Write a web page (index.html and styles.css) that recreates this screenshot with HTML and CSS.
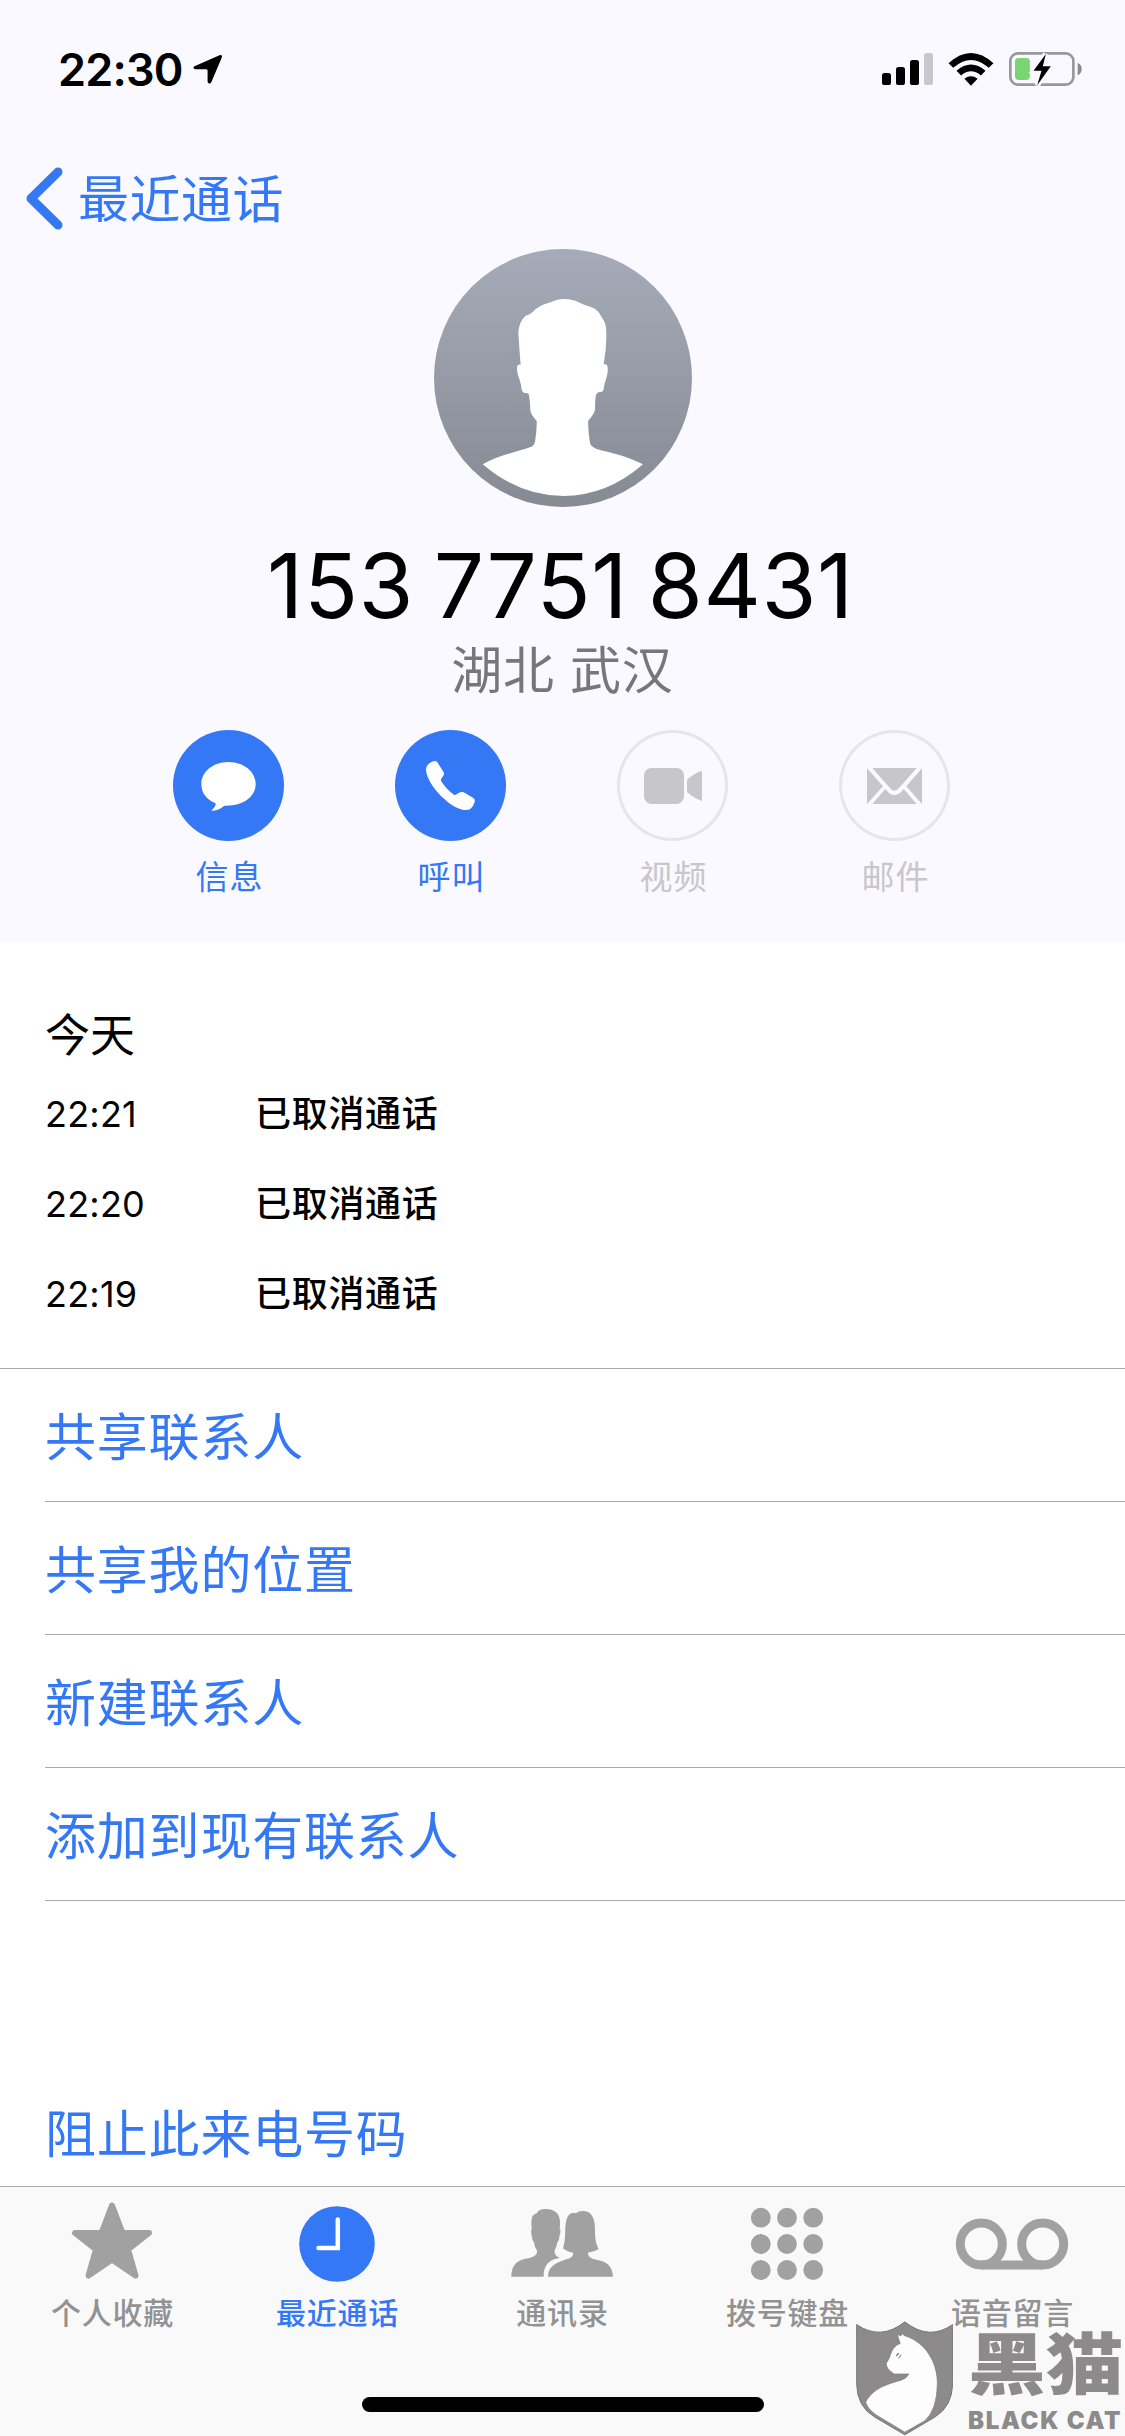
FILE: index.html
```html
<!DOCTYPE html>
<html lang="zh-CN">
<head>
  <meta charset="utf-8">
  <title>最近通话</title>
  <link rel="stylesheet" href="styles.css">
</head>
<body>
  <div class="header">
    <div class="status-bar">
      <span class="time">22:30</span>
      <svg class="location-icon" viewBox="0 0 30 30">
        <path d="M1.5 12.2L26.5 1.2Q29.6 .4 28.8 3.6L18.4 28Q16.4 31 14.6 28V16.4Q14.4 15.4 13.4 15.2H2Q-1 14.2 1.5 12.2Z"/>
      </svg>
      <div class="status-icons">
        <svg class="signal-icon" viewBox="0 0 51 32">
          <rect x="0" y="20" width="9" height="12" rx="2.6"/>
          <rect x="14" y="14" width="9" height="18" rx="2.6"/>
          <rect x="28" y="7" width="9" height="25" rx="2.6"/>
          <rect x="42" y="0" width="9" height="32" rx="2.6" fill="#c8c7cc"/>
        </svg>
        <svg class="wifi-icon" viewBox="294 65 138 100">
          <path d="M295 96Q363 34 431 96L417 110Q363 62 309 110Z"/>
          <path d="M319 119Q363 81 407 119L393 133Q363 108 333 133Z"/>
          <path d="M343 143Q363 128 383 143L363 164Z"/>
        </svg>
        <svg class="battery-icon" viewBox="477 66 220 102">
          <rect x="481" y="70" width="190" height="94" rx="23" fill="none" stroke="#98989c" stroke-width="8"/>
          <path d="M684 98Q696 104 696 117T684 136Z" fill="#8a8a8e"/>
          <rect x="495" y="84" width="45" height="66" rx="11" fill="#77d672"/>
          <path d="M587 72L551 122H575L562 166L603 109H579Z" fill="none" stroke="#f9f9ff" stroke-width="16"/>
          <path d="M588 72L551 122H575L562 166L603 109H579Z"/>
        </svg>
      </div>
    </div>

    <div class="nav-bar">
      <svg class="back-icon" viewBox="0 0 37 63">
        <path d="M32 5L5 31.5L32 58"/>
      </svg>
      <span class="back-label">最近通话</span>
    </div>

    <div class="contact">
      <svg class="avatar" viewBox="102 57 774 774">
        <defs>
          <linearGradient id="avatar-bg" x1="0" y1="0" x2="0" y2="1">
            <stop offset="0" stop-color="#a6abb9"/>
            <stop offset="1" stop-color="#858a93"/>
          </linearGradient>
        </defs>
        <circle cx="489" cy="444" r="387" fill="url(#avatar-bg)"/>
        <path fill="#fff" d="M490 207Q515 206 539 218Q557 227 575 232Q595 240 604 260Q615 273 618 293Q622 345 611 403Q626 399 623 425C621 445 615 450 611 477Q610 487 599 486Q590 487 587 498Q585 515 585 540Q580 556 564 573Q565 610 570 639Q573 650 588 656C635 670 675 675 729 703Q620 798 490 798T248 703C290 678 345 667 390 652Q403 647 405 635Q411 600 410 573Q390 550 391 540Q390 510 386 492Q383 488 373 489Q365 486 364 472C362 450 352 440 351 418Q350 400 362 404Q358 360 355 310Q356 275 377 257C385 254 390 254 397 247Q415 226 452 217Q472 207 490 207Z"/>
      </svg>
      <div class="phone-number">153 7751 8431</div>
      <div class="region">湖北 武汉</div>
    </div>

    <div class="actions">
      <div class="action">
        <div class="action-circle">
          <svg viewBox="69 60 333 333">
            <path d="M235 156C281 156 317 185 317 222S281 289 223 287Q206 302 184 302Q198 290 197 280Q154 262 154 222C154 185 190 156 235 156Z"/>
          </svg>
        </div>
        <span>信息</span>
      </div>
      <div class="action">
        <div class="action-circle">
          <svg viewBox="735 60 333 333">
            <path d="M850 154Q858 151 862 157L881 187Q883 191 881 196L873 207Q872 211 874 214Q890 240 912 254Q915 256 919 253L932 246Q937 245 941 247L970 264Q976 268 974 276Q970 290 961 297Q953 301 938 299C900 292 835 230 828 182Q827 161 850 154Z"/>
          </svg>
        </div>
        <span>呼叫</span>
      </div>
      <div class="action disabled">
        <div class="action-circle">
          <svg viewBox="111 60 333 333">
            <rect x="192" y="174" width="120" height="108" rx="23"/>
            <path d="M321 209Q342 190 366 182V273Q342 265 321 246Z"/>
          </svg>
        </div>
        <span>视频</span>
      </div>
      <div class="action disabled">
        <div class="action-circle">
          <svg viewBox="777 60 333 333">
            <path d="M861 175L909 229L861 282ZM1026 175L979 229L1026 282ZM877 174H1010L959 232Q943 253 928 232ZM877 282L916 237L926 248Q943 262 961 248L971 237L1010 282Z"/>
          </svg>
        </div>
        <span>邮件</span>
      </div>
    </div>
  </div>

  <div class="calls">
    <div class="calls-day">今天</div>
    <div class="call"><span class="call-time">22:21</span><span>已取消通话</span></div>
    <div class="call"><span class="call-time">22:20</span><span>已取消通话</span></div>
    <div class="call"><span class="call-time">22:19</span><span>已取消通话</span></div>
  </div>

  <div class="options">
    <div class="option">共享联系人</div>
    <div class="option">共享我的位置</div>
    <div class="option">新建联系人</div>
    <div class="option">添加到现有联系人</div>
  </div>
  <div class="block-caller">阻止此来电号码</div>

  <div class="tab-bar">
    <div class="tabs">
      <div class="tab">
        <svg viewBox="0 0 110 78">
          <path d="M55 4.500L65.500 32H92L71 48.500L78.500 74.500L55 58.500L31.500 74.500L39 48.500L18 32H44.500Z" stroke="#a1a1a1" stroke-width="6" stroke-linejoin="round"/>
        </svg>
        <span>个人收藏</span>
      </div>
      <div class="tab active">
        <svg class="clock-icon" viewBox="0 0 110 82">
          <circle cx="55" cy="43" r="37.800"/>
          <path d="M55.800 18.500V47H36.500" fill="none" stroke="#fff" stroke-width="4.500" stroke-linecap="round"/>
        </svg>
        <span>最近通话</span>
      </div>
      <div class="tab">
        <svg viewBox="0 0 110 78">
          <g transform="translate(-57 -31.300) scale(.3333)">
            <path d="M184 321C184 285 203 269 240 265Q264 258 261 242Q253 232 252 217Q246 213 243 185Q246 181 245 174C243 145 245 137 260 131Q266 117 290 118C322 119 332 140 330 165L329 178Q334 184 329 196Q327 215 322 218Q321 231 314 242Q312 258 329 265C298 268 280 288 281 321Z"/>
            <path d="M294 321C294 295 310 281 345 270Q374 263 369 249Q350 246 339 236Q346 215 346 175C348 145 355 124 378 131Q386 123 402 124C425 125 436 148 435 180C435 215 440 225 446 238Q433 247 414 249Q412 265 440 270C472 276 488 291 489 321Z"/>
          </g>
        </svg>
        <span>通讯录</span>
      </div>
      <div class="tab">
        <svg viewBox="0 0 110 80">
          <circle cx="28.800" cy="16.700" r="9.900"/><circle cx="55" cy="16.700" r="9.900"/><circle cx="81.200" cy="16.700" r="9.900"/>
          <circle cx="28.800" cy="43" r="9.900"/><circle cx="55" cy="43" r="9.900"/><circle cx="81.200" cy="43" r="9.900"/>
          <circle cx="28.800" cy="69" r="9.900"/><circle cx="55" cy="69" r="9.900"/><circle cx="81.200" cy="69" r="9.900"/>
        </svg>
        <span>拨号键盘</span>
      </div>
      <div class="tab">
        <svg class="voicemail-icon" viewBox="-2 0 114 80">
          <circle cx="24.300" cy="43" r="21"/>
          <circle cx="85.700" cy="43" r="21"/>
          <path d="M24.300 64H85.700"/>
        </svg>
        <span>语音留言</span>
      </div>
    </div>
    <div class="home-indicator"></div>
  </div>

  <div class="watermark">
    <svg class="shield" viewBox="48 423 292 345">
      <path d="M50 433Q122 483 195 425Q268 483 339 433V610Q338 680 285 712L195 765L105 712Q50 680 50 610Z" fill="#8d8a8b" stroke="#777" stroke-width="3"/>
      <path d="M172 463L183 467L187 461L195 467C255 485 293 545 293 610Q292 690 255 723L195 757L110 706Q85 690 77 667C100 620 155 610 185 600Q202 594 207 582Q185 582 163 582Q138 566 139 550Q147 540 153 520Q160 498 181 490Z" fill="#fdfdfd" stroke="#777" stroke-width="2"/>
      <path d="M168 529Q170 519 178 518L174 526ZM184 521Q185 532 173 536L179 529Z" fill="#777"/>
    </svg>
    <div class="brand">
      <span class="brand-cn">黑猫</span>
      <span class="brand-en">BLACK CAT</span>
    </div>
  </div>
</body>
</html>
```
FILE: styles.css
```css
* {
  box-sizing: border-box;
}
body {
  margin: 0;
  width: 1125px;
  height: 2436px;
  position: relative;
  overflow: hidden;
  background-color: #fff;
  color: #000;
  font-family: Inter, "Noto Sans CJK SC", sans-serif;
}
svg {
  display: block;
  flex-shrink: 0;
}
.header {
  height: 943px;
  background-color: #f9f9ff;
}

/* status bar */
.status-bar {
  height: 132px;
  display: flex;
  align-items: center;
  padding: 6px 43px 0 58px;
}
.time {
  width: 135px;
  font-size: 45px;
  font-weight: 600;
  letter-spacing: -0.8px;
  white-space: nowrap;
}
.location-icon {
  width: 30px;
  height: 30px;
}
.status-icons {
  margin-left: auto;
  display: flex;
  align-items: center;
}
.signal-icon {
  width: 51px;
  height: 32px;
}
.wifi-icon {
  width: 46px;
  height: 33px;
  margin: 0 15px;
}
.battery-icon {
  width: 73px;
  height: 34px;
}

/* navigation */
.nav-bar {
  height: 117px;
  display: flex;
  align-items: flex-start;
  padding: 35px 0 0 26px;
  color: #3478f6;
}
.back-icon {
  width: 37px;
  height: 63px;
  fill: none;
  stroke: #3478f6;
  stroke-width: 9;
  stroke-linecap: round;
  stroke-linejoin: round;
}
.back-label {
  margin-left: 15px;
  font-size: 51px;
  line-height: 65px;
  letter-spacing: 0.5px;
}

/* contact card */
.contact {
  display: flex;
  flex-direction: column;
  align-items: center;
}
.avatar {
  width: 258px;
  height: 258px;
}
.phone-number {
  margin-top: 25px;
  padding-right: 4px;
  font-size: 89px;
  line-height: 108px;
  letter-spacing: 0.6px;
  word-spacing: -6px;
}
.region {
  margin-top: 1px;
  font-size: 51px;
  line-height: 60px;
  letter-spacing: 0.8px;
  color: #77777a;
}
.actions {
  display: flex;
  justify-content: center;
  gap: 111px;
  margin-top: 29px;
  padding-right: 2px;
}
.action {
  width: 111px;
  display: flex;
  flex-direction: column;
  align-items: center;
  font-size: 33px;
  line-height: 40px;
  letter-spacing: 1px;
  color: #3478f6;
}
.action span {
  padding-left: 2px;
}
.action-circle {
  width: 111px;
  height: 111px;
  margin-bottom: 16px;
  border-radius: 50%;
  background-color: #3478f6;
}
.action-circle svg {
  width: 111px;
  height: 111px;
  fill: #fff;
}
.disabled {
  color: #c7c7cc;
}
.disabled .action-circle {
  background: none;
  box-shadow: inset 0 0 0 3px #e5e5ea;
}
.disabled svg {
  fill: #c7c6cb;
}

/* call history */
.calls {
  height: 426px;
  padding: 63px 45px 0;
  border-bottom: 1px solid #a9a9ab;
}
.calls-day {
  font-size: 45px;
  line-height: 60px;
}
.call {
  display: flex;
  height: 90px;
  padding-top: 23px;
  font-size: 36px;
  line-height: 50px;
  font-weight: 500;
  letter-spacing: 0.7px;
}
.call-time {
  width: 210px;
  font-weight: 400;
  letter-spacing: 0.2px;
}

/* option rows */
.options {
  padding-left: 45px;
}
.option,
.block-caller {
  height: 133px;
  font-size: 51px;
  line-height: 137px;
  letter-spacing: 0.8px;
  color: #3478f6;
}
.option {
  border-bottom: 1px solid #a9a9ab;
}
.block-caller {
  margin-top: 165px;
  padding-left: 45px;
}

/* tab bar */
.tab-bar {
  position: absolute;
  left: 0;
  right: 0;
  bottom: 0;
  height: 250px;
  border-top: 1px solid #adadad;
  background-color: #f9f9f9;
}
.tabs {
  display: flex;
}
.tab {
  width: 225px;
  padding-top: 14px;
  display: flex;
  flex-direction: column;
  align-items: center;
  font-size: 30px;
  font-weight: 500;
  line-height: 40px;
  letter-spacing: 0.8px;
  color: #929292;
}
.tab svg {
  width: 110px;
  height: 78px;
  margin: 0 1px 14px 0;
  fill: #a1a1a1;
  overflow: visible;
}
.tab.active {
  color: #3478f6;
}
.tab.active svg {
  height: 82px;
  margin-bottom: 10px;
  fill: #3478f6;
}
.tab:nth-child(n+4) svg {
  height: 80px;
  margin-bottom: 12px;
}
.tab .voicemail-icon {
  width: 114px;
  fill: none;
  stroke: #a1a1a1;
  stroke-width: 9;
}
.home-indicator {
  width: 402px;
  height: 15px;
  margin: 64px auto 0;
  border-radius: 8px;
  background-color: #000;
}

/* watermark over the tab bar */
.watermark {
  position: absolute;
  right: 0;
  bottom: 0;
  width: 269px;
  height: 115px;
  display: flex;
  color: #8d8a8b;
}
.shield {
  width: 97px;
  height: 115px;
}
.brand {
  margin-left: 15px;
  white-space: nowrap;
}
.brand-cn {
  display: block;
  width: 136px;
  font-size: 67px;
  font-weight: 900;
  line-height: 88px;
  transform: scaleX(1.16);
  transform-origin: left;
}
.brand-en {
  display: block;
  font-size: 24px;
  font-weight: 900;
  line-height: 24px;
  letter-spacing: 1.7px;
}
```
